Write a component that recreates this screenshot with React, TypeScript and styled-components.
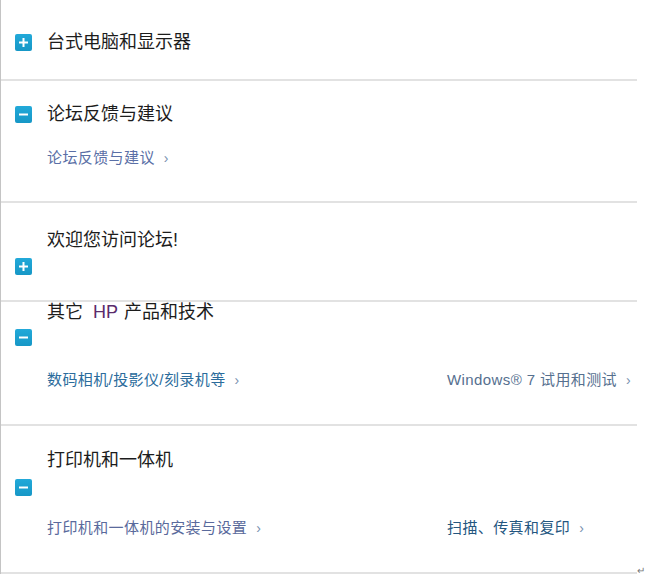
import React from 'react';
import styled, { createGlobalStyle } from 'styled-components';

const GlobalStyle = createGlobalStyle`
  html, body {
    margin: 0;
    padding: 0;
    background: #fff;
  }
  body {
    font-family: 'Liberation Sans', 'Noto Sans CJK SC', sans-serif;
  }
`;

const Panel = styled.div`
  width: 636px;
  border-left: 1px solid #c4c4c4;
  background: #fff;
`;

const Section = styled.section<{ $top: number; $bottom: number }>`
  display: flex;
  flex-direction: column;
  padding: ${(p) => p.$top}px 0 ${(p) => p.$bottom}px 14px;
  border-bottom: 2px solid #e2e2e2;
`;

const HeadRow = styled.div`
  display: flex;
  align-items: center;
  gap: 15px;
  height: 20px;
`;

const Title = styled.h3<{ $indent?: boolean }>`
  margin: 0 0 0 ${(p) => (p.$indent ? 32 : 0)}px;
  font-size: 18px;
  line-height: 20px;
  font-weight: normal;
  color: #1c1c1c;
  white-space: nowrap;
`;

const Brand = styled.span`
  color: #5a2b6c;
  margin: 0 6px 0 10px;
`;

const Toggle = styled.span<{ $gap?: number }>`
  display: flex;
  flex: none;
  width: 17px;
  height: 17px;
  margin-top: ${(p) => p.$gap ?? 0}px;
  border-radius: 2px;
  background: linear-gradient(#22a9d9, #1697c6);
  align-items: center;
  justify-content: center;
`;

const Links = styled.div<{ $gap: number }>`
  display: grid;
  grid-template-columns: 400px 1fr;
  margin-top: ${(p) => p.$gap}px;
  padding-left: 32px;
`;

const LinkItem = styled.a<{ $color: string }>`
  font-size: 15px;
  line-height: 20px;
  letter-spacing: 0.4px;
  color: ${(p) => p.$color};
  text-decoration: none;
  white-space: nowrap;
`;

const Chevron = styled.span`
  margin-left: 9px;
  font-size: 14px;
  color: #7890b0;
`;

const Footer = styled.div`
  width: 645px;
  margin-top: -8px;
  text-align: right;
  font-size: 10px;
  line-height: 10px;
  color: #777;
`;

function Icon({ open, gap }: { open: boolean; gap?: number }) {
  return (
    <Toggle $gap={gap}>
      <svg width="11" height="11" viewBox="0 0 11 11">
        <rect x="1" y="4.5" width="9" height="2" fill="#fff" />
        {!open && <rect x="4.5" y="1" width="2" height="9" fill="#fff" />}
      </svg>
    </Toggle>
  );
}

function Link({ text, color }: { text: string; color: string }) {
  return (
    <LinkItem href="#" $color={color}>
      {text}
      <Chevron>›</Chevron>
    </LinkItem>
  );
}

export default function App() {
  return (
    <>
      <GlobalStyle />
      <Panel>
        <Section $top={32} $bottom={27}>
          <HeadRow>
            <Icon open={false} />
            <Title>台式电脑和显示器</Title>
          </HeadRow>
        </Section>

        <Section $top={23} $bottom={33}>
          <HeadRow>
            <Icon open />
            <Title>论坛反馈与建议</Title>
          </HeadRow>
          <Links $gap={24}>
            <Link text="论坛反馈与建议" color="#5a6fa6" />
          </Links>
        </Section>

        <Section $top={27} $bottom={25}>
          <Title $indent>欢迎您访问论坛!</Title>
          <Icon open={false} gap={8} />
        </Section>

        <Section $top={0} $bottom={34}>
          <Title $indent>
            其它<Brand>HP</Brand>产品和技术
          </Title>
          <Icon open gap={7} />
          <Links $gap={24}>
            <Link text="数码相机/投影仪/刻录机等" color="#2b6c9c" />
            <Link text="Windows® 7 试用和测试" color="#56708f" />
          </Links>
        </Section>

        <Section $top={24} $bottom={34}>
          <Title $indent>打印机和一体机</Title>
          <Icon open gap={9} />
          <Links $gap={22}>
            <Link text="打印机和一体机的安装与设置" color="#5a6a9c" />
            <Link text="扫描、传真和复印" color="#24567f" />
          </Links>
        </Section>
      </Panel>
      <Footer>↵</Footer>
    </>
  );
}
